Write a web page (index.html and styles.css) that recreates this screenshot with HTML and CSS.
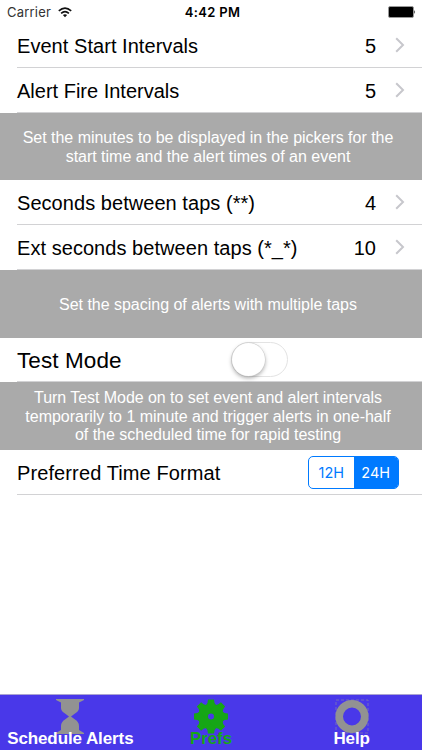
FILE: index.html
```html
<!DOCTYPE html>
<html lang="en">
<head>
<meta charset="utf-8">
<title>Prefs</title>
<link rel="stylesheet" href="styles.css">
</head>
<body>
<header class="status">
  <div class="carrier"><span>Carrier</span>
    <svg width="14" height="11" viewBox="0 0 14 11" fill="none" stroke="#111" stroke-width="1.6"><path d="M.8 3.9Q7-1.7 13.2 3.9M3.1 6.3Q7 2.8 10.9 6.3"/><path d="M4.9 8Q7 6.3 9.1 8L7 10.2Z" fill="#111" stroke="none"/></svg>
  </div>
  <div class="clock">4:42 PM</div>
  <svg class="battery" width="28" height="12" viewBox="0 0 28 12"><rect x=".5" y=".5" width="25" height="11" rx="1.5" fill="#000" stroke="#999"/><path d="M26.3 4Q28 6 26.3 8Z" fill="#111"/></svg>
</header>
<main>
  <div class="row"><span class="label">Event Start Intervals</span><span class="value">5</span><svg class="chevron" viewBox="0 0 10 16"><path d="M1.2 1.2L8 8L1.2 14.8"/></svg></div>
  <div class="row"><span class="label plain">Alert Fire Intervals</span><span class="value">5</span><svg class="chevron" viewBox="0 0 10 16"><path d="M1.2 1.2L8 8L1.2 14.8"/></svg></div>
  <p class="note"><span>Set the minutes to be displayed in the pickers for the</span><span>start time and the alert times of an event</span></p>
  <div class="row"><span class="label">Seconds between taps (**)</span><span class="value">4</span><svg class="chevron" viewBox="0 0 10 16"><path d="M1.2 1.2L8 8L1.2 14.8"/></svg></div>
  <div class="row"><span class="label">Ext seconds between taps (*_*)</span><span class="value">10</span><svg class="chevron" viewBox="0 0 10 16"><path d="M1.2 1.2L8 8L1.2 14.8"/></svg></div>
  <p class="note tall"><span>Set the spacing of alerts with multiple taps</span></p>
  <div class="row test"><span class="label">Test Mode</span><span class="switch"><span class="knob"></span></span></div>
  <p class="note three"><span class="tight">Turn Test Mode on to set event and alert intervals</span><span>temporarily to 1 minute and trigger alerts in one-half</span><span>of the scheduled time for rapid testing</span></p>
  <div class="row"><span class="label wide">Preferred Time Format</span><span class="segments"><span class="segment">12H</span><span class="segment on">24H</span></span></div>
</main>
<nav class="tabs">
  <div class="tab">
    <svg width="28" height="35" viewBox="0 0 28 35"><path fill="#929292" d="M0 0H28V1L23 3.5V9Q23 12 19 14.5L15 17.5L19 20.5Q23 23 23 27V31L28 34V35H0V34L5 31V27Q5 23 9 20.5L13 17.5L9 14.5Q5 12 5 9V3.5L0 1Z"/></svg>
    <span>Schedule Alerts</span>
  </div>
  <div class="tab active">
    <svg width="34" height="35" viewBox="-17 -17.5 34 35"><g fill="#16a616"><circle r="12.6"/><path id="tooth" d="M-5-11.4Q-3-13-3-17H3Q3-13 5-11.4V11.4Q3 13 3 17H-3Q-3 13-5 11.4Z"/><use href="#tooth" transform="rotate(45)"/><use href="#tooth" transform="rotate(90)"/><use href="#tooth" transform="rotate(135)"/></g><circle r="3" fill="#4938e9"/></svg>
    <span>Prefs</span>
  </div>
  <div class="tab">
    <svg width="34" height="35" viewBox="0 0 34 35"><rect x="1" y="1" width="32" height="33" fill="none" stroke="#746bbd" stroke-dasharray="3 2"/><circle cx="17" cy="17.5" r="12.8" fill="none" stroke="#929292" stroke-width="7.6"/></svg>
    <span>Help</span>
  </div>
</nav>
</body>
</html>
```
FILE: styles.css
```css
* { box-sizing: border-box; }
body {
  margin: 0;
  width: 422px;
  height: 750px;
  overflow: hidden;
  display: flex;
  flex-direction: column;
  background: #fff;
  color: #000;
  font-family: "Liberation Sans", Arial, sans-serif;
}
.status {
  height: 23px;
  flex: none;
  display: grid;
  grid-template-columns: 1fr auto 1fr;
  align-items: center;
  padding: 1px 7px 0;
  font: 13px/22px Inter, sans-serif;
}
.carrier { display: flex; align-items: center; gap: 7px; color: #333; letter-spacing: .2px; }
.clock { font-weight: 600; letter-spacing: .35px; padding-left: 3px; }
.battery { justify-self: end; margin-right: -1px; }
main { flex: 1; }
.row {
  height: 45px;
  margin-left: 17px;
  padding-right: 17px;
  display: flex;
  align-items: center;
  border-bottom: 1px solid #d2d2d4;
  font-size: 20px;
  white-space: nowrap;
}
.label { margin-right: auto; padding-top: 2px; letter-spacing: .05px; }
.plain { letter-spacing: 0; }
.wide { letter-spacing: .11px; }
.value { padding-top: 2px; }
.chevron { width: 10px; height: 16px; margin-left: 19px; fill: none; stroke: #c7c7cc; stroke-width: 2; }
.note {
  margin: 0;
  height: 67px;
  display: flex;
  flex-direction: column;
  align-items: center;
  justify-content: center;
  background: #aaa;
  color: #fff;
  font-size: 16px;
  line-height: 18.4px;
  letter-spacing: -.02px;
  white-space: nowrap;
  padding: 2px 6px 0 0;
}
.tight { letter-spacing: -.05px; }
.tall { height: 68px; padding-top: 3px; }
.test { height: 44px; }
.test .label { font-size: 22.5px; letter-spacing: .1px; }
.three { height: 68px; padding-top: 2px; }
.switch { width: 57px; height: 35px; margin-right: 117px; border: 1.5px solid #e3e3e3; border-radius: 18px; }
.knob { display: block; width: 33px; height: 33px; margin: -.5px; border-radius: 50%; background: #fff; box-shadow: 0 0 0 .5px #ccc, 0 2px 4px rgba(0,0,0,.35); }
.segments { display: flex; width: 91px; height: 33px; margin-right: 6px; border: 1px solid #007aff; border-radius: 5px; overflow: hidden; font: 14.5px/32px Inter, sans-serif; }
.segment { width: 45px; text-align: center; color: #007aff; }
.on { background: #007aff; color: #fff; }
.tabs { height: 56px; flex: none; display: grid; grid-template-columns: repeat(3, 1fr); background: #4938e9; border-top: 1px solid #aaa3d2; }
.tab { display: flex; flex-direction: column; align-items: center; padding-top: 4px; color: #fff; font-size: 17px; font-weight: bold; line-height: 20px; letter-spacing: -.1px; }
.tab svg { flex: none; }
.tab span { position: relative; margin-top: -5px; }
.active { color: #16a616; }
```
